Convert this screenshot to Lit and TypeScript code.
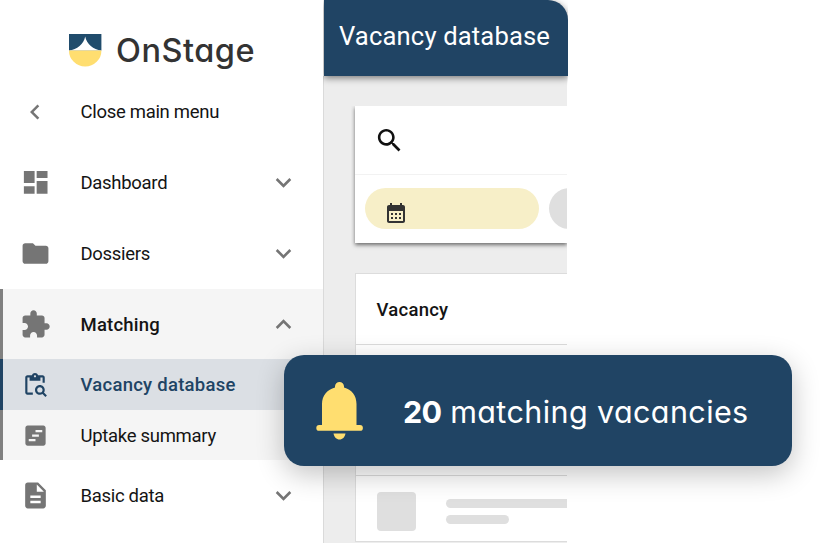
import { LitElement, html, css, svg, nothing } from "lit";
import { customElement, property } from "lit/decorators.js";
import { classMap } from "lit/directives/class-map.js";

const icons: Record<string, any> = {
  left: svg`<path d="M15.41 7.41 14 6l-6 6 6 6 1.41-1.41L10.83 12z"/>`,
  down: svg`<path d="M16.59 8.59 12 13.17 7.41 8.59 6 10l6 6 6-6z"/>`,
  up: svg`<path d="m12 8-6 6 1.41 1.41L12 10.83l4.59 4.58L18 14z"/>`,
  dashboard: svg`<path d="M3 12.4h8.3V3H3zm0 8.4h8.3v-5.9H3zm9.9 0h8.4v-9.9h-8.4zm0-17.8v5.6h8.4V3z"/>`,
  folder: svg`<path d="M10 4H4c-1.1 0-1.99.9-1.99 2L2 18c0 1.1.9 2 2 2h16c1.1 0 2-.9 2-2V8c0-1.1-.9-2-2-2h-8z"/>`,
  extension: svg`<path d="M20.5 11H19V7c0-1.1-.9-2-2-2h-4V3.5C13 2.12 11.88 1 10.5 1S8 2.12 8 3.5V5H4c-1.1 0-1.99.9-1.99 2v3.8H3.5c1.49 0 2.7 1.21 2.7 2.7s-1.21 2.7-2.7 2.7H2V20c0 1.1.9 2 2 2h3.8v-1.5c0-1.49 1.21-2.7 2.7-2.7 1.49 0 2.7 1.21 2.7 2.7V22H17c1.1 0 2-.9 2-2v-4h1.5c1.38 0 2.5-1.12 2.5-2.5S21.88 11 20.5 11z"/>`,
  pasteSearch: svg`<path d="M5 5h2v3h10V5h2v5h2V5c0-1.1-.9-2-2-2h-4.18C14.4 1.84 13.3 1 12 1s-2.4.84-2.82 2H5c-1.1 0-2 .9-2 2v14c0 1.1.9 2 2 2h5v-2H5zm7-2c.55 0 1 .45 1 1s-.45 1-1 1-1-.45-1-1 .45-1 1-1z"/><path d="M20.3 18.9c.4-.7.7-1.5.7-2.4 0-2.5-2-4.5-4.5-4.5S12 14 12 16.5s2 4.5 4.5 4.5c.9 0 1.7-.3 2.4-.7l2.7 2.7 1.4-1.4zm-3.8.1c-1.4 0-2.5-1.1-2.5-2.5s1.1-2.5 2.5-2.5 2.5 1.1 2.5 2.5-1.1 2.5-2.5 2.5z"/>`,
  summary: svg`<path fill-rule="evenodd" d="M5 3h14c1.1 0 2 .9 2 2v14c0 1.1-.9 2-2 2H5c-1.1 0-2-.9-2-2V5c0-1.1.9-2 2-2zm7 4v2h6V7zm-3 4v2h6v-2zm-3 4v2h6v-2z"/>`,
  description: svg`<path d="M14 2H6c-1.1 0-1.99.9-1.99 2L4 20c0 1.1.89 2 1.99 2H18c1.1 0 2-.9 2-2V8zm2 16H8v-2h8zm0-4H8v-2h8zm-3-5V3.5L18.5 9z"/>`,
  search: svg`<path d="M15.5 14h-.79l-.28-.27C15.41 12.59 16 11.11 16 9.5 16 5.91 13.09 3 9.5 3S3 5.91 3 9.5 5.91 16 9.5 16c1.61 0 3.09-.59 4.23-1.57l.27.28v.79l5 4.99L20.49 19zm-6 0C7.01 14 5 11.99 5 9.5S7.01 5 9.5 5 14 7.01 14 9.5 11.99 14 9.5 14z"/>`,
  calendar: svg`<path fill-rule="evenodd" d="M19 4h-1V2h-2v2H8V2H6v2H5c-1.1 0-2 .9-2 2v14c0 1.1.9 2 2 2h14c1.1 0 2-.9 2-2V6c0-1.1-.9-2-2-2zm0 16H5V10h14zM7 12h2v2H7zm4 0h2v2h-2zm4 0h2v2h-2zm-8 4h2v2H7zm4 0h2v2h-2zm4 0h2v2h-2z"/>`,
};

const icon = (name: string, size: number) => html`
  <svg width=${size} height=${size} viewBox="0 0 24 24" fill="currentColor">${icons[name]}</svg>
`;

@customElement("menu-row")
export class MenuRow extends LitElement {
  @property() icon = "";
  @property() label = "";
  @property() arrow = "";
  @property({ type: Number }) size = 31;
  @property({ type: Boolean }) sub = false;
  @property({ type: Boolean }) open = false;
  @property({ type: Boolean }) selected = false;

  static styles = css`
    :host {
      display: block;
    }
    .row {
      display: flex;
      align-items: center;
      box-sizing: border-box;
      height: 70.7px;
      padding: 0 24.5px 0 15.5px;
      border-left: 3px solid transparent;
      color: #141414;
      font-size: 18.5px;
      letter-spacing: -0.3px;
    }
    .sub {
      height: 50.6px;
    }
    .sub,
    .open {
      background: #f5f5f5;
      border-left-color: #808080;
    }
    .open {
      padding-top: 1px;
      font-weight: 500;
      letter-spacing: 0.2px;
    }
    .selected {
      background: #dbdfe4;
      border-left-color: #204464;
      color: #204464;
      font-weight: 500;
      letter-spacing: 0.25px;
    }
    .icon {
      display: flex;
      justify-content: center;
      width: 33px;
      margin-right: 29px;
      color: #757575;
    }
    .selected .icon {
      color: #204464;
    }
    .label {
      flex: 1;
      padding-top: 1px;
      white-space: nowrap;
    }
    .arrow {
      display: flex;
      color: #757575;
    }
  `;

  render() {
    const classes = { row: true, sub: this.sub, open: this.open, selected: this.selected };
    return html`
      <div class=${classMap(classes)}>
        <span class="icon">${icon(this.icon, this.size)}</span>
        <span class="label">${this.label}</span>
        ${this.arrow ? html`<span class="arrow">${icon(this.arrow, 31)}</span>` : nothing}
      </div>
    `;
  }
}

@customElement("app-root")
export class AppRoot extends LitElement {
  static styles = css`
    :host {
      display: block;
      position: relative;
      width: 824px;
      height: 543px;
      overflow: hidden;
      background: #fff;
      font-family: Roboto, "Liberation Sans", sans-serif;
    }
    .layout {
      display: flex;
      height: 543px;
    }
    .menu {
      width: 323px;
    }
    .brand {
      display: flex;
      align-items: center;
      box-sizing: border-box;
      height: 76.5px;
      padding: 24px 0 0 69px;
      gap: 14px;
    }
    .name {
      color: #333;
      font-family: Inter, sans-serif;
      font-feature-settings: "cv11";
      font-size: 32.5px;
      font-weight: 500;
      letter-spacing: 0.5px;
    }
    .main {
      display: flex;
      flex-direction: column;
      width: 245px;
      overflow: hidden;
    }
    .bar {
      display: flex;
      align-items: center;
      flex: none;
      box-sizing: border-box;
      height: 76px;
      margin-left: 1px;
      padding: 0 0 4px 15px;
      border-radius: 0 20px 0 0;
      background: #204464;
      color: #fff;
      font-size: 25.6px;
      letter-spacing: 0.15px;
      white-space: nowrap;
      box-shadow: 0 2px 7px rgba(0, 0, 0, 0.5);
      z-index: 1;
    }
    .page {
      flex: 1;
      box-sizing: border-box;
      width: 244px;
      padding: 30px 0 0 31px;
      border-left: 1px solid #dadada;
      background: #ededed;
      overflow: hidden;
    }
    .filters {
      height: 137px;
      background: #fff;
      box-shadow: 0 2px 4px rgba(0, 0, 0, 0.55);
      clip-path: inset(0 0 -8px -4px);
    }
    .search {
      display: flex;
      align-items: center;
      box-sizing: border-box;
      height: 69px;
      padding-left: 18.5px;
      border-bottom: 1px solid #f2f2f2;
      color: #111;
    }
    .chips {
      display: flex;
      gap: 10px;
      padding: 13px 0 0 10px;
    }
    .chip {
      flex: none;
      box-sizing: border-box;
      width: 174px;
      height: 41px;
      padding: 13px 0 0 19px;
      border-radius: 21px;
      background: #f7efc8;
      color: #333;
    }
    .plain {
      background: #dfdfdf;
    }
    .table {
      margin-top: 30px;
      border: solid #dcdcdc;
      border-width: 1px 0 0 1px;
      background: #fff;
    }
    .head {
      display: flex;
      align-items: center;
      box-sizing: border-box;
      height: 71px;
      padding: 2px 0 0 20.5px;
      border-bottom: 1px solid #dcdcdc;
      color: #141414;
      font-size: 18.5px;
      font-weight: 500;
      letter-spacing: 0.25px;
    }
    .item {
      display: flex;
      align-items: center;
      box-sizing: border-box;
      height: 65.5px;
      padding: 7px 0 0 21px;
      gap: 30px;
      border-bottom: 1px solid #dcdcdc;
      overflow: hidden;
    }
    .thumb {
      flex: none;
      width: 39px;
      height: 39px;
      border-radius: 4px;
      background: #dfdfdf;
    }
    .lines {
      display: flex;
      flex-direction: column;
      gap: 7px;
    }
    .line {
      width: 160px;
      height: 9px;
      border-radius: 5px;
      background: #dfdfdf;
    }
    .short {
      width: 63px;
    }
    /* floats over both the menu and the page */
    .notice {
      position: absolute;
      left: 284px;
      top: 355px;
      display: flex;
      align-items: center;
      box-sizing: border-box;
      width: 508px;
      height: 111px;
      padding-left: 32px;
      border-radius: 20px;
      background: #204464;
      color: #fff;
      box-shadow: 0 8px 28px rgba(0, 0, 0, 0.24);
      z-index: 2;
    }
    .message {
      margin: 2px 0 0 39px;
      font-family: Inter, sans-serif;
      font-feature-settings: "cv11";
      font-size: 30.5px;
      font-weight: 400;
      letter-spacing: 0.4px;
      white-space: nowrap;
    }
    .count {
      font-weight: 700;
      letter-spacing: -0.8px;
    }
  `;

  render() {
    return html`
      <div class="layout">
        <nav class="menu">
          <div class="brand">
            <svg width="33" height="33" viewBox="0 0 33 33">
              <path fill="#204c6c" d="M0 0h32.4v16.5H0z" />
              <path fill="#fff" d="M0 16.6C8 15.5 14.8 10 16.2 2.4 17.6 10 24.4 15.5 32.4 16.6z" />
              <path fill="#ffde70" d="M0 16.4h32.4a16.2 16.2 0 0 1-32.4 0z" />
            </svg>
            <span class="name">OnStage</span>
          </div>
          <menu-row icon="left" label="Close main menu" size="30"></menu-row>
          <menu-row icon="dashboard" label="Dashboard" arrow="down"></menu-row>
          <menu-row icon="folder" label="Dossiers" arrow="down"></menu-row>
          <menu-row icon="extension" label="Matching" arrow="up" open></menu-row>
          <menu-row icon="pasteSearch" label="Vacancy database" size="26" sub selected></menu-row>
          <menu-row icon="summary" label="Uptake summary" size="27" sub></menu-row>
          <menu-row icon="description" label="Basic data" arrow="down"></menu-row>
        </nav>
        <main class="main">
          <header class="bar">Vacancy database</header>
          <div class="page">
            <section class="filters">
              <div class="search">${icon("search", 31)}</div>
              <div class="chips">
                <div class="chip">${icon("calendar", 24)}</div>
                <div class="chip plain"></div>
              </div>
            </section>
            <section class="table">
              <div class="head">Vacancy</div>
              <div class="item"></div>
              <div class="item"></div>
              <div class="item">
                <div class="thumb"></div>
                <div class="lines">
                  <div class="line"></div>
                  <div class="line short"></div>
                </div>
              </div>
            </section>
          </div>
        </main>
      </div>
      <div class="notice">
        <svg width="48" height="60" viewBox="0 0 48 60" fill="#ffde70">
          <path d="M6 44V23C6 14.5 11.5 8.5 19 6.5V5.5a4.5 4.5 0 0 1 9 0v1C35.5 8.5 40.5 14.5 40.5 23v21H44a2.9 2.9 0 0 1 0 5.8H3.2a2.9 2.9 0 0 1 0-5.8z" />
          <path d="M17.5 52.5h12c-.7 3.8-3 6-6 6s-5.3-2.2-6-6z" />
        </svg>
        <span class="message"><span class="count">20</span> matching vacancies</span>
      </div>
    `;
  }
}
